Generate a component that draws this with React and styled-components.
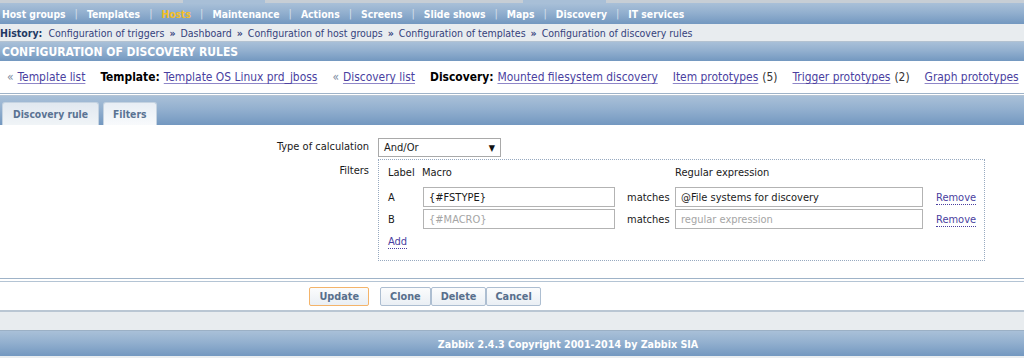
import React from 'react';
import styled, { createGlobalStyle } from 'styled-components';

const FONT = `"DejaVu Sans Condensed", "DejaVu Sans", Verdana, sans-serif`;
const BAR = 'linear-gradient(#a9c0d8 0%, #93b0cf 45%, #7398c0 100%)';

const GlobalStyle = createGlobalStyle`
  html, body { margin: 0; padding: 0; }
  body {
    background: #e9edf0;
    font-family: ${FONT};
    font-size: 11px;
    color: #1a1a1a;
    overflow: hidden;
  }
`;

const Page = styled.div`
  width: 1024px;
  overflow: hidden;
`;

const TopStrip = styled.div`
  height: 3px;
  display: flex;
  background: #c7ced5;
`;

const TopTab = styled.div`
  margin-left: ${p => p.$offset}px;
  width: ${p => p.$width}px;
  background: #a8bfd7;
`;

const MainMenu = styled.nav`
  height: 21px;
  display: flex;
  align-items: center;
  padding-left: 2px;
  background: ${BAR};
  white-space: nowrap;
  font-size: 10.3px;
`;

const MenuItem = styled.span`
  font-weight: bold;
  color: ${p => (p.$active ? '#f5bf25' : '#ffffff')};
`;

const MenuSep = styled.span`
  color: #d3dee9;
  padding: 0 9px;
  font-size: 11px;
`;

const HistoryBar = styled.div`
  height: 17px;
  display: flex;
  align-items: center;
  background: #e8ecef;
  border-bottom: 1px solid #b3c2d1;
  white-space: nowrap;
  overflow: hidden;
  font-size: 10.5px;
`;

const HistoryLabel = styled.b`
  color: #1f3863;
  margin-right: 6px;
`;

const Crumb = styled.span`
  color: #35427c;
`;

const CrumbSep = styled.span`
  color: #35427c;
  font-weight: bold;
  padding: 0 5px;
`;

const SectionHeader = styled.div`
  height: 19px;
  display: flex;
  align-items: center;
  padding-left: 2px;
  background: ${BAR};
  color: #ffffff;
  font-weight: bold;
  font-size: 12px;
  text-transform: uppercase;
`;

const LinksRow = styled.div`
  height: 32px;
  display: flex;
  align-items: center;
  gap: 15px;
  padding-left: 7px;
  background: #ffffff;
  white-space: nowrap;
  overflow: hidden;
  font-size: 11.92px;
`;

const LinkGroup = styled.span`
  color: #1a1a1a;
`;

const Arrow = styled.span`
  color: #7a8aa0;
  margin-right: 4px;
`;

const Strong = styled.b`
  color: #000;
  margin-right: 4px;
`;

const Link = styled.a`
  color: #4a3f9f;
  text-decoration: underline;
  text-decoration-color: #8e86c8;
  text-underline-offset: 2px;
  cursor: pointer;
`;

const Count = styled.span`
  color: #333;
  margin-left: 4px;
`;

const DoubleRule = styled.div`
  height: ${p => p.$gap}px;
  background: #ffffff;
  border-top: 1px solid #9fb3c8;
  border-bottom: 1px solid #b4c4d4;
`;

const TabBar = styled.div`
  height: 29px;
  box-sizing: border-box;
  padding: 6px 0 0 2px;
  display: flex;
  align-items: flex-end;
  gap: 4px;
  background: ${BAR};
`;

const Tab = styled.div`
  height: 23px;
  box-sizing: border-box;
  padding: 0 ${p => (p.$active ? 9 : 10)}px;
  display: flex;
  align-items: center;
  font-weight: bold;
  font-size: 10.3px;
  color: #5a7393;
  border: 1px solid #c5d3e1;
  border-bottom: none;
  border-radius: 3px 3px 0 0;
  background: ${p =>
    p.$active
      ? 'linear-gradient(#e8eef5, #f8fafc)'
      : 'linear-gradient(#e1e8f0, #f0f4f7)'};
`;

const Form = styled.div`
  background: #ffffff;
  padding: 13px 0 17px;
  display: grid;
  grid-template-columns: 369px 1fr;
  column-gap: 9px;
  row-gap: 2px;
`;

const FieldLabel = styled.div`
  text-align: right;
  color: #1a1a1a;
  line-height: 14px;
  padding-top: ${p => p.$top}px;
`;

const Select = styled.div`
  width: 123px;
  height: 19px;
  box-sizing: border-box;
  border: 1px solid #a9a9a9;
  display: flex;
  align-items: center;
  justify-content: space-between;
  padding: 0 5px 0 5px;
  color: #1a1a1a;
  background: #fff;
`;

const SelectArrow = styled.span`
  font-size: 9px;
  color: #111;
`;

const FilterBox = styled.div`
  width: 607px;
  box-sizing: border-box;
  border: 1px dotted #97a9c0;
  padding: 3px 9px 8px;
  display: grid;
  grid-template-columns: 34px 205px 48px 261px auto;
  grid-template-rows: 23px 22px 22px 22px;
  align-items: center;
`;

const Cell = styled.div`
  color: #1a1a1a;
  white-space: nowrap;
  align-self: ${p => (p.$head ? 'start' : 'center')};
  line-height: ${p => (p.$head ? '20px' : 'normal')};
`;

const TextInput = styled.input`
  box-sizing: border-box;
  width: ${p => p.$width}px;
  height: 20px;
  margin-left: ${p => p.$shift || 0}px;
  border: 1px solid #b3b3b3;
  padding: 0 5px;
  font-family: ${FONT};
  font-size: 11px;
  color: #1a1a1a;
  background: #fff;
  outline: none;
  display: block;
  &::placeholder {
    color: #a5a5a5;
  }
`;

const DottedLink = styled.a`
  color: #4a3f9f;
  border-bottom: 1px dotted #4a3f9f;
  cursor: pointer;
  line-height: 13px;
`;

const ButtonRow = styled.div`
  background: #ffffff;
  padding: 5px 0 4px;
  display: grid;
  grid-template-columns: 369px 1fr;
  column-gap: 9px;
  border-bottom: 2px solid #b9c6d3;
`;

const ButtonCell = styled.div`
  display: flex;
  justify-content: ${p => (p.$end ? 'flex-end' : 'flex-start')};
  padding-left: ${p => (p.$end ? 0 : 2)}px;
`;

const Button = styled.button`
  height: 19px;
  box-sizing: border-box;
  padding: 0 ${p => p.$pad}px;
  font-family: ${FONT};
  font-size: 10.8px;
  font-weight: bold;
  color: #586f8c;
  background: linear-gradient(#fbfcfd, #eaeff4);
  border: 1px solid ${p => (p.$primary ? '#f4b46a' : '#adbed1')};
  border-radius: 2px;
  cursor: pointer;
  display: block;
`;

const GrayBand = styled.div`
  height: 18px;
  background: #e8ecef;
`;

const Footer = styled.footer`
  height: 26px;
  box-sizing: border-box;
  border-top: 1px solid #9bb0c5;
  display: flex;
  align-items: center;
  justify-content: center;
  padding-left: 112px;
  background: ${BAR};
  color: #ffffff;
  font-weight: bold;
  font-size: 10.6px;
`;

const menu = [
  'Host groups',
  'Templates',
  'Hosts',
  'Maintenance',
  'Actions',
  'Screens',
  'Slide shows',
  'Maps',
  'Discovery',
  'IT services',
];

const history = [
  'Configuration of triggers',
  'Dashboard',
  'Configuration of host groups',
  'Configuration of templates',
  'Configuration of discovery rules',
];

export default function App() {
  return (
    <Page>
      <GlobalStyle />
      <TopStrip>
        <TopTab $offset={183} $width={82} />
        <TopTab $offset={258} $width={83} />
      </TopStrip>
      <MainMenu>
        {menu.map((m, i) => (
          <React.Fragment key={m}>
            {i > 0 && <MenuSep>|</MenuSep>}
            <MenuItem $active={m === 'Hosts'}>{m}</MenuItem>
          </React.Fragment>
        ))}
      </MainMenu>
      <HistoryBar>
        <HistoryLabel>History:</HistoryLabel>
        {history.map((h, i) => (
          <React.Fragment key={h}>
            {i > 0 && <CrumbSep>»</CrumbSep>}
            <Crumb>{h}</Crumb>
          </React.Fragment>
        ))}
      </HistoryBar>
      <SectionHeader>Configuration of discovery rules</SectionHeader>
      <LinksRow>
        <LinkGroup>
          <Arrow>«</Arrow>
          <Link>Template list</Link>
        </LinkGroup>
        <LinkGroup>
          <Strong>Template:</Strong>
          <Link>Template OS Linux prd_jboss</Link>
        </LinkGroup>
        <LinkGroup>
          <Arrow>«</Arrow>
          <Link>Discovery list</Link>
        </LinkGroup>
        <LinkGroup>
          <Strong>Discovery:</Strong>
          <Link>Mounted filesystem discovery</Link>
        </LinkGroup>
        <LinkGroup>
          <Link>Item prototypes</Link>
          <Count>(5)</Count>
        </LinkGroup>
        <LinkGroup>
          <Link>Trigger prototypes</Link>
          <Count>(2)</Count>
        </LinkGroup>
        <LinkGroup>
          <Link>Graph prototypes</Link>
        </LinkGroup>
      </LinksRow>
      <DoubleRule $gap={1} />
      <TabBar>
        <Tab>Discovery rule</Tab>
        <Tab $active>Filters</Tab>
      </TabBar>
      <Form>
        <FieldLabel $top={2}>Type of calculation</FieldLabel>
        <Select>
          <span>And/Or</span>
          <SelectArrow>▼</SelectArrow>
        </Select>
        <FieldLabel $top={5}>Filters</FieldLabel>
        <FilterBox>
          <Cell $head>Label</Cell>
          <Cell $head>Macro</Cell>
          <Cell $head />
          <Cell $head>Regular expression</Cell>
          <Cell $head />

          <Cell>A</Cell>
          <Cell>
            <TextInput $width={192} $shift={1} readOnly value="{#FSTYPE}" />
          </Cell>
          <Cell>matches</Cell>
          <Cell>
            <TextInput $width={248} readOnly value="@File systems for discovery" />
          </Cell>
          <Cell>
            <DottedLink>Remove</DottedLink>
          </Cell>

          <Cell>B</Cell>
          <Cell>
            <TextInput $width={192} $shift={1} readOnly placeholder="{#MACRO}" />
          </Cell>
          <Cell>matches</Cell>
          <Cell>
            <TextInput $width={248} readOnly placeholder="regular expression" />
          </Cell>
          <Cell>
            <DottedLink>Remove</DottedLink>
          </Cell>

          <Cell>
            <DottedLink>Add</DottedLink>
          </Cell>
        </FilterBox>
      </Form>
      <DoubleRule $gap={2} />
      <ButtonRow>
        <ButtonCell $end>
          <Button $primary $pad={9}>Update</Button>
        </ButtonCell>
        <ButtonCell>
          <Button $pad={9}>Clone</Button>
          <Button $pad={9}>Delete</Button>
          <Button $pad={8}>Cancel</Button>
        </ButtonCell>
      </ButtonRow>
      <GrayBand />
      <Footer>Zabbix 2.4.3 Copyright 2001-2014 by Zabbix SIA</Footer>
    </Page>
  );
}
